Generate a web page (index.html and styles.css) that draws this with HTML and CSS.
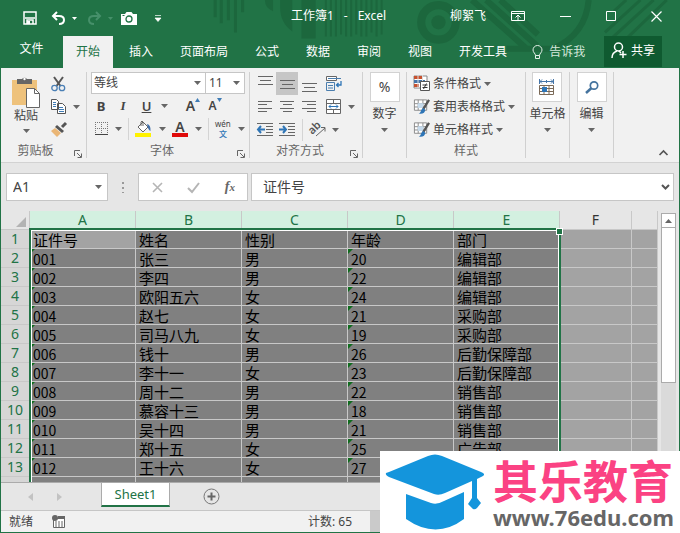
FILE: index.html
```html
<!DOCTYPE html>
<html lang="zh-CN">
<head>
<meta charset="utf-8">
<title>工作簿1 - Excel</title>
<link rel="stylesheet" href="styles.css">
</head>
<body>
<svg class="defs" aria-hidden="true">
  <symbol id="caret" viewBox="0 0 7 4"><path d="M0 0h7L3.500 4z" fill="currentColor"/></symbol>
  <symbol id="launch" viewBox="0 0 8 8"><path d="M.5 6V.5H6M3 3l4 4M7.500 3.500v4h-4" fill="none" stroke="#666"/></symbol>
  <symbol id="brushcell" viewBox="0 0 18 17"><path d="M1.500 1.500h13v11h-13zM5.500 1.500v11M10.500 1.500v11M1.500 5.500h13M1.500 9h13" fill="#fff" stroke="#888"/><path d="M5 5h6v5H5z" fill="#c5daec"/><path d="M17 1.500L11 11" stroke="#555" stroke-width="2.500"/><path d="M6 16c3-1 2-5 5-6l2 2c0 3-3 5-7 4z" fill="#2e75b6"/></symbol>
</svg>
<main class="window">
  <header class="top">
    <svg class="pattern" viewBox="0 0 680 67" preserveAspectRatio="xMaxYMin slice" aria-hidden="true">
      <g fill="none" stroke="#1c673d">
        <path d="M223 0v17M229 0v23M236 0v20M243 0v32M250 0v12" stroke-width="3"/>
        <path d="M332 0v36M337 0v36M342 0v36M347 0v34M352 0v36M357 0v36M362 0v34M367 0v36M372 0v36M377 0v32M382 0v36M387 0v34" stroke-width="2"/>
        <circle cx="443" cy="22" r="17" stroke-width="8"/>
        <path d="M476 0l55 49M490 0l50 45M504 0l37 34M591 0q-3 34-35 48H510" stroke-width="6"/>
        <path d="M655 0l-46 42M642 0l-35 32M668 0l-48 46M628 0l-12 11" stroke-width="3"/>
      </g>
      <circle cx="443" cy="22" r="7" fill="#1c673d"/>
      <path d="M287 0h12v31q-12-8-12-24zM308 0h14v38h-14zM272 0h8v11q-8-3-8-11z" fill="#1c673d"/>
    </svg>
    <div class="titlebar">
      <div class="quick">
        <button aria-label="保存"><svg width="14" height="14" viewBox="0 0 14 14"><path d="M1 1h12v12H1z" fill="none" stroke="#fff" stroke-width="1.500"/><path d="M2 7h10M4 13v-4h6v4" fill="none" stroke="#fff" stroke-width="1.500"/><path d="M4 10h3v3H4z" fill="#fff"/></svg></button>
        <button class="undo" aria-label="撤消"><svg width="15" height="14" viewBox="0 0 15 14"><path d="M6 1L2 5l4 4M2 5h6q5 0 5 4t-5 4" fill="none" stroke="#fff" stroke-width="2"/></svg><svg width="5" height="3"><use href="#caret"/></svg></button>
        <button class="redo" aria-label="恢复"><svg width="15" height="14" viewBox="0 0 15 14"><path d="M9 1l4 4-4 4M13 5H7q-5 0-5 4t5 4" fill="none" stroke="currentColor" stroke-width="2"/></svg><svg width="5" height="3"><use href="#caret"/></svg></button>
        <button class="camera" aria-label="照相机"><svg width="16" height="13" viewBox="0 0 16 13"><path d="M0 2h4l1.500-2h5L12 2h4v11H0z" fill="#fff"/><circle cx="8" cy="7" r="3" fill="none" stroke="#217346" stroke-width="1.300"/><path d="M1.500 3.500h2" stroke="#217346"/></svg></button>
        <button class="more" aria-label="自定义快速访问工具栏"><svg width="6" height="7" viewBox="0 0 6 7"><path d="M0 .5h6M0 3h6L3 6.500z" fill="#fff" stroke="#fff" stroke-width=".7"/></svg></button>
      </div>
      <h1><span>工作簿1</span><span>-</span><span>Excel</span></h1>
      <div class="winctl">
        <span>柳絮飞</span>
        <button aria-label="功能区显示选项"><svg width="14" height="12" viewBox="0 0 14 12"><path d="M.5 1.500h13v9H.5zM.5 3.500h13M7 10V5M4.500 7.500L7 5l2.500 2.500" fill="none" stroke="#fff"/></svg></button>
        <button aria-label="最小化"><svg width="11" height="12"><path d="M0 6.500h11" stroke="#fff"/></svg></button>
        <button aria-label="最大化"><svg width="10" height="10"><path d="M.5.5h9v9h-9z" fill="none" stroke="#fff"/></svg></button>
        <button aria-label="关闭"><svg width="11" height="11"><path d="M.5.5l10 10M10.500.5l-10 10" stroke="#fff" stroke-width="1.200"/></svg></button>
      </div>
    </div>
    <nav class="tabs">
      <button class="file">文件</button>
      <button class="active">开始</button>
      <button>插入</button>
      <button>页面布局</button>
      <button>公式</button>
      <button>数据</button>
      <button>审阅</button>
      <button>视图</button>
      <button>开发工具</button>
      <button class="tell"><svg width="11" height="15" viewBox="0 0 11 15"><path d="M3.500 10.500c0-2-2.500-3-2.500-5.500a4.500 4.500 0 0 1 9 0c0 2.500-2.500 3.500-2.500 5.500zM3.500 10.500v3h4v-3" fill="none" stroke="#e4f1e9"/></svg>告诉我</button>
      <button class="share"><svg width="16" height="17" viewBox="0 0 16 17"><circle cx="7.500" cy="5" r="4" fill="none" stroke="#fff" stroke-width="1.500"/><path d="M1 16c0-4 2-6 5-7M8 9l2 2M12 9v7M8.500 12.500h7" fill="none" stroke="#fff" stroke-width="1.500"/></svg>共享</button>
    </nav>
  </header>

  <section class="ribbon">
    <div class="group clip">
      <div class="body">
        <button class="big paste"><svg width="29" height="31" viewBox="0 0 29 31"><path d="M0 3h25v25H0z" fill="#eec27c"/><path d="M5 2h5a3 3 0 0 1 5 0h5v5H5z" fill="#666"/><circle cx="12.500" cy="2" r="1.200" fill="#fff"/><path d="M14.500 11.500h8l5 5v14h-13z" fill="#fff" stroke="#666"/><path d="M22.500 11.500v5h5" fill="none" stroke="#666"/></svg><span>粘贴</span><svg class="caret"><use href="#caret"/></svg></button>
        <div class="stack">
          <button aria-label="剪切"><svg width="15" height="16" viewBox="0 0 15 16"><path d="M3 1l6.500 9M12 1L5.500 10" stroke="#555" stroke-width="2"/><circle cx="3.500" cy="12" r="2.700" fill="none" stroke="#4a7fb5" stroke-width="1.300"/><circle cx="11" cy="12" r="2.700" fill="none" stroke="#4a7fb5" stroke-width="1.300"/></svg></button>
          <button aria-label="复制"><svg width="15" height="15" viewBox="0 0 15 15"><path d="M.5.5h5l2 2v8h-7zM6.500 4.500h5l3 3v7h-8z" fill="#fff" stroke="#555"/><path d="M2 3.500h3M2 5.500h3M2 7.500h3M8 8.500h4M8 10.500h5M8 12.500h5" stroke="#3f7cb6"/></svg><svg class="caret"><use href="#caret"/></svg></button>
          <button aria-label="格式刷"><svg width="16" height="15" viewBox="0 0 16 15"><path d="M15 1l-4 4" stroke="#555" stroke-width="3"/><path d="M6 3l7 6-2 2-7-6z" fill="#555"/><path d="M4 6l6 5-4 4-6-6z" fill="#eab676"/></svg></button>
        </div>
      </div>
      <div class="label">剪贴板<button class="launch" aria-label="剪贴板设置"><svg><use href="#launch"/></svg></button></div>
    </div>

    <div class="group font">
      <div class="body rows">
        <div class="row fields">
          <label class="pick name"><select aria-label="字体"><option>等线</option></select><svg class="caret"><use href="#caret"/></svg></label>
          <label class="pick size"><select aria-label="字号"><option>11</option></select><svg class="caret"><use href="#caret"/></svg></label>
        </div>
        <div class="row letters">
          <button class="b" aria-label="加粗">B</button>
          <button class="i" aria-label="倾斜">I</button>
          <button class="u" aria-label="下划线"><u>U</u><svg class="caret"><use href="#caret"/></svg></button>
          <button class="grow" aria-label="增大字号">A<svg width="5" height="4"><path d="M0 4h5L2.500 0z" fill="#3f7cb6"/></svg></button>
          <button class="shrink" aria-label="减小字号">A<svg width="5" height="4"><path d="M0 0h5L2.500 4z" fill="#3f7cb6"/></svg></button>
        </div>
        <div class="row colors">
          <button aria-label="边框"><svg width="13" height="13"><path d="M.5 0v12M6.500 0v12M12.500 0v12M0 .5h13M0 6.500h13" stroke="#777" stroke-dasharray="1 1"/><path d="M0 12.500h13" stroke="#444"/></svg><svg class="caret"><use href="#caret"/></svg></button>
          <i class="split"></i>
          <button aria-label="填充颜色"><svg width="17" height="17" viewBox="0 0 17 17"><path d="M3 7l5-5 5 5-5 5z" fill="#fff" stroke="#666"/><path d="M6 6V2q1-2 2 0v4" fill="none" stroke="#666"/><path d="M12 4q4 1 3.500 7Q13 10 12 4z" fill="#3f6ea8"/><path d="M0 13h16v4H0z" fill="#fff200"/></svg><svg class="caret"><use href="#caret"/></svg></button>
          <button class="ink" aria-label="字体颜色"><b>A</b><svg class="caret"><use href="#caret"/></svg></button>
          <i class="split"></i>
          <button class="pinyin" aria-label="显示或隐藏拼音字段"><span>wén<b>文</b></span><svg class="caret"><use href="#caret"/></svg></button>
        </div>
      </div>
      <div class="label">字体<button class="launch" aria-label="字体设置"><svg><use href="#launch"/></svg></button></div>
    </div>

    <div class="group align">
      <div class="body rows">
        <div class="row">
          <button aria-label="顶端对齐"><svg width="15" height="17"><path d="M0 1.500h15M2 5.500h11M0 9.500h15" stroke="#666"/></svg></button>
          <button class="on" aria-label="垂直居中"><svg width="15" height="17"><path d="M0 5.500h15M2 9.500h11M0 13.500h15" stroke="#666"/></svg></button>
          <button aria-label="底端对齐"><svg width="15" height="17"><path d="M0 8.500h15M2 12.500h11M0 16.500h15" stroke="#666"/></svg></button>
          <button class="wide" aria-label="自动换行"><svg width="16" height="16" viewBox="0 0 16 16"><path d="M.5.5h10v4H.5z" fill="#fff" stroke="#666"/><path d="M2 2.500h13M.5 6.500h8v8h-8zM2 9.500h5M2 12h5" fill="none" stroke="#4b7eae"/><path d="M15 5v4h-4M12.500 7l-2 2 2 2" fill="none" stroke="#2e75b6" stroke-width="1.300"/></svg></button>
        </div>
        <div class="row">
          <button aria-label="左对齐"><svg width="15" height="12"><path d="M0 .5h14M0 3.500h9M0 7.500h14M0 10.500h9" stroke="#666"/></svg></button>
          <button aria-label="居中"><svg width="15" height="12"><path d="M0 .5h14M3 3.500h9M0 7.500h14M3 10.500h9" stroke="#666"/></svg></button>
          <button aria-label="右对齐"><svg width="15" height="12"><path d="M0 .5h14M5 3.500h9M0 7.500h14M5 10.500h9" stroke="#666"/></svg></button>
          <button class="wide" aria-label="合并后居中"><svg width="15" height="15"><path d="M.5.5h14v14H.5zM.5 4.500h14M.5 10.500h14M7.500 0v4M7.500 11v4" fill="#fff" stroke="#666"/><path d="M3 7.500h9M5 5.500l-2 2 2 2M10 5.500l2 2-2 2" fill="none" stroke="#2e75b6"/></svg><svg class="caret"><use href="#caret"/></svg></button>
        </div>
        <div class="row">
          <button aria-label="减少缩进量"><svg width="16" height="13"><path d="M0 .5h16M9 3.500h7M9 6.500h7M9 9.500h7M0 12.500h16" stroke="#666"/><path d="M8 6.500H1M4 3L1 6.500 4 10" fill="none" stroke="#2e75b6" stroke-width="2"/></svg></button>
          <button aria-label="增加缩进量"><svg width="16" height="13"><path d="M0 .5h16M9 3.500h7M9 6.500h7M9 9.500h7M0 12.500h16" stroke="#666"/><path d="M0 6.500h7M4 3l3 3.500L4 10" fill="none" stroke="#2e75b6" stroke-width="2"/></svg></button>
          <i class="split"></i>
          <button class="orient" aria-label="方向"><svg width="16" height="15" viewBox="0 0 16 15"><text x="-2" y="9" transform="rotate(-45 5 6)">ab</text><path d="M6 14l9-8M11 5.500h4v4" fill="none" stroke="#666"/></svg><svg class="caret"><use href="#caret"/></svg></button>
        </div>
      </div>
      <div class="label">对齐方式<button class="launch" aria-label="对齐设置"><svg><use href="#launch"/></svg></button></div>
    </div>

    <div class="group narrow">
      <button class="big boxed"><span class="box">%</span><span>数字</span><svg class="caret"><use href="#caret"/></svg></button>
    </div>

    <div class="group styles">
      <div class="body rows">
        <button class="row"><svg width="17" height="17" viewBox="0 0 17 17"><path d="M1 1h13v12H1z" fill="#fff" stroke="#888"/><path d="M1 1h8v3H1zM1 9h5v3H1z" fill="#c7512e"/><path d="M1 5h11v3H1z" fill="#4575a8"/><path d="M5 0v13M9.500 0v9" stroke="#ddd"/><path d="M7.500 6.500h9v9h-9z" fill="#fff" stroke="#555"/><path d="M9.500 10h5M9.500 12.500h5M13.500 8.500l-3 5.500" stroke="#333"/></svg>条件格式<svg class="caret"><use href="#caret"/></svg></button>
        <button class="row"><svg width="17" height="17"><use href="#brushcell"/></svg>套用表格格式<svg class="caret"><use href="#caret"/></svg></button>
        <button class="row"><svg width="17" height="17"><use href="#brushcell"/></svg>单元格样式<svg class="caret"><use href="#caret"/></svg></button>
      </div>
      <div class="label plain">样式</div>
    </div>

    <div class="group narrow">
      <button class="big boxed"><span class="box"><svg width="16" height="17" viewBox="0 0 16 17"><path d="M1 2.500h13M3 .5l-2 2 2 2M12 .5l2 2-2 2M.5 0v5M14.500 0v5M7.500 1v3" fill="none" stroke="#4575a8"/><path d="M.5 6.500h14v9H.5zM.5 9.500h14M.5 12.500h14M5 6v9M10 6v9" fill="#fff" stroke="#7b6a58"/><path d="M3 8h5v5H3z" fill="#2e75b6"/></svg></span><span>单元格</span><svg class="caret"><use href="#caret"/></svg></button>
    </div>
    <div class="group narrow">
      <button class="big boxed"><span class="box"><svg width="14" height="13" viewBox="0 0 14 13"><circle cx="9" cy="4.500" r="3.700" fill="none" stroke="#44739e" stroke-width="1.700"/><path d="M6.500 7L1 12" stroke="#44739e" stroke-width="2.500"/></svg></span><span>编辑</span><svg class="caret"><use href="#caret"/></svg></button>
    </div>
    <button class="collapse" aria-label="折叠功能区"><svg width="9" height="6"><path d="M.5 5l4-4 4 4" fill="none" stroke="#555" stroke-width="1.700"/></svg></button>
  </section>

  <section class="formula">
    <label class="namebox"><input value="A1" aria-label="名称框"><svg class="caret"><use href="#caret"/></svg></label>
    <svg class="dots" width="2" height="12"><path d="M1 1v11" stroke="#999" stroke-width="2" stroke-dasharray="2 3"/></svg>
    <div class="fx">
      <button aria-label="取消"><svg width="11" height="11"><path d="M1 1l9 9M10 1l-9 9" stroke="#b5b5b5" stroke-width="1.600"/></svg></button>
      <button aria-label="输入"><svg width="13" height="11"><path d="M1 6l4 4 7-9" fill="none" stroke="#b5b5b5" stroke-width="2"/></svg></button>
      <button class="fn" aria-label="插入函数">f<small>x</small></button>
    </div>
    <label class="entry"><input value="证件号" aria-label="编辑栏"><svg width="9" height="6"><path d="M1 1l3.500 3.500L8 1" fill="none" stroke="#555" stroke-width="2"/></svg></label>
  </section>

  <section class="sheet">
    <div class="cells">
      <table>
        <colgroup><col class="rh"><col class="c"><col class="c"><col class="c"><col class="c"><col class="c"><col class="f"><col></colgroup>
        <thead><tr><th class="corner"><svg width="10" height="10"><path d="M10 0v10H0z" fill="#b3b3b3"/></svg></th><th>A</th><th>B</th><th>C</th><th>D</th><th>E</th><th class="off">F</th><th class="off"></th></tr></thead>
        <tbody>
          <tr><th>1</th><td class="current">证件号</td><td>姓名</td><td>性别</td><td>年龄</td><td>部门</td><td></td><td></td></tr>
          <tr><th>2</th><td class="t">001</td><td>张三</td><td>男</td><td class="t">20</td><td>编辑部</td><td></td><td></td></tr>
          <tr><th>3</th><td class="t">002</td><td>李四</td><td>男</td><td class="t">22</td><td>编辑部</td><td></td><td></td></tr>
          <tr><th>4</th><td class="t">003</td><td>欧阳五六</td><td>女</td><td class="t">24</td><td>编辑部</td><td></td><td></td></tr>
          <tr><th>5</th><td class="t">004</td><td>赵七</td><td>女</td><td class="t">21</td><td>采购部</td><td></td><td></td></tr>
          <tr><th>6</th><td class="t">005</td><td>司马八九</td><td>女</td><td class="t">19</td><td>采购部</td><td></td><td></td></tr>
          <tr><th>7</th><td class="t">006</td><td>钱十</td><td>男</td><td class="t">26</td><td>后勤保障部</td><td></td><td></td></tr>
          <tr><th>8</th><td class="t">007</td><td>李十一</td><td>女</td><td class="t">23</td><td>后勤保障部</td><td></td><td></td></tr>
          <tr><th>9</th><td class="t">008</td><td>周十二</td><td>男</td><td class="t">22</td><td>销售部</td><td></td><td></td></tr>
          <tr><th>10</th><td class="t">009</td><td>慕容十三</td><td>男</td><td class="t">18</td><td>销售部</td><td></td><td></td></tr>
          <tr><th>11</th><td class="t">010</td><td>吴十四</td><td>男</td><td class="t">21</td><td>销售部</td><td></td><td></td></tr>
          <tr><th>12</th><td class="t">011</td><td>郑十五</td><td>女</td><td class="t">25</td><td>广告部</td><td></td><td></td></tr>
          <tr><th>13</th><td class="t">012</td><td>王十六</td><td>女</td><td class="t">27</td><td></td><td></td><td></td></tr>
          <tr><th></th><td></td><td></td><td></td><td></td><td></td><td></td><td></td></tr>
        </tbody>
      </table>
      <div class="selection"></div>
    </div>
    <div class="scroll">
      <button aria-label="向上滚动"><svg width="7" height="4"><path d="M0 4h7L3.500 0z" fill="#666"/></svg></button>
      <div class="track"><div class="thumb"></div></div>
    </div>
  </section>

  <nav class="sheets">
    <button class="prev" aria-label="上一个工作表"><svg width="5" height="8"><path d="M5 0v8L0 4z" fill="#c2c2c2"/></svg></button>
    <button class="next" aria-label="下一个工作表"><svg width="5" height="8"><path d="M0 0v8l5-4z" fill="#c2c2c2"/></svg></button>
    <button class="sheet-tab">Sheet1</button>
    <button class="add" aria-label="新工作表"><svg width="17" height="17"><circle cx="8.500" cy="8.500" r="7.500" fill="none" stroke="#777"/><path d="M8.500 4.500v8M4.500 8.500h8" stroke="#666" stroke-width="2"/></svg></button>
  </nav>
  <footer class="status">
    <span>就绪</span>
    <button aria-label="录制宏"><svg width="14" height="13" viewBox="0 0 14 13"><path d="M1.500 3.500h11v9h-11z" fill="#fff" stroke="#666"/><path d="M6 2.500h7" stroke="#666" stroke-width="3"/><circle cx="3" cy="3" r="3" fill="#666"/><path d="M3 7h8M3 9h8M3 11h8" stroke="#666" stroke-dasharray="2 1"/></svg></button>
    <span class="count">计数: 65</span>
    <div class="views"></div>
  </footer>
</main>

<aside class="brand">
  <svg width="100" height="76" viewBox="0 0 100 76" aria-hidden="true"><path d="M1 18Q0 20 4 22L49 39Q54 41 60 38L87 26V43L83 49L88 54Q90 55 92 53L96 48L92 43V24L98 21Q101 19 96 17L57 1Q50-2 43 1L4 17Z" fill="#1495dc"/><path d="M21 39l25 9q6 2 13-2l20-9v27q-28 21-58 0z" fill="#1495dc"/></svg>
  <div><strong>其乐教育</strong><span>www.76edu.com</span></div>
</aside>
</body>
</html>
```

FILE: styles.css
```css
* { box-sizing: border-box; }
body {
  margin: 0;
  font: 12px/16px "Noto Sans", "Noto Sans CJK SC", sans-serif;
  color: #444;
}
button, input, select { font: inherit; color: inherit; border: 0; padding: 0; margin: 0; background: none; border-radius: 0; }
button { display: flex; align-items: center; justify-content: center; white-space: nowrap; }
svg { display: block; flex: none; overflow: visible; }
.defs { position: absolute; width: 0; height: 0; }
.caret { width: 7px; height: 4px; color: #666; }

.window {
  display: flex;
  flex-direction: column;
  height: 100vh;
  border: 1px solid #217346;
  border-top: 0;
  background: #e6e6e6;
  overflow: hidden;
}

/* title bar and tabs */
.top { position: relative; background: #217346; color: #fff; }
.pattern { position: absolute; inset: 0; width: 100%; height: 100%; }
.titlebar { position: relative; display: grid; grid-template-columns: 1fr auto 1fr; align-items: center; height: 36px; }
.quick { display: flex; align-items: center; gap: 12px; padding: 0 0 0 22px; }
.quick button { gap: 6px; }
.quick .undo { margin-left: 2px; }
.quick .redo { color: #46906a; margin-left: -2px; }
.quick .camera { margin-left: -4px; }
.quick .more { margin-left: 6px; }
h1 { display: flex; gap: 10px; font-size: 12px; font-weight: 400; margin: 0; padding: 0 3px 4px 0; }
.winctl { display: flex; align-items: center; justify-content: flex-end; gap: 35px; padding: 0 17px 4px 0; }
.winctl span { margin-right: -10px; white-space: nowrap; }
.tabs { position: relative; display: flex; gap: 1px; height: 32px; }
.tabs button { padding: 0 13px; }
.tabs .file { width: 61px; padding-bottom: 6px; }
.tabs .active { background: #f1f1f1; color: #217346; margin-right: 2px; }
.tabs .tell { gap: 6px; padding: 0 0 0 11px; color: #d5e8dc; }
.tabs .share { gap: 4px; height: 31px; padding: 0 7px 2px; margin: 0 17px 0 auto; background: #0f5a30; }

/* ribbon */
.ribbon { display: flex; height: 95px; padding: 4px 0 4px; background: #f1f1f1; border-bottom: 1px solid #d2d2d2; }
.group { flex: none; display: flex; flex-direction: column; border-right: 1px solid #d0d0d0; }
.body { height: 69px; display: flex; }
.rows { flex-direction: column; }
.row { height: 23px; display: flex; align-items: center; }
.label { height: 17px; display: flex; justify-content: center; align-items: flex-end; position: relative; color: #666; padding: 3px 16px 0 0; line-height: 14px; }
.plain { padding-right: 6px; }
.launch { position: absolute; right: 4px; bottom: 0; }
.launch svg { width: 8px; height: 8px; }
.big { flex-direction: column; justify-content: flex-start; }
.clip { width: 86px; }
.paste { width: 50px; padding: 5px 0 0; }
.paste .caret { margin-top: 5px; }
.stack { display: grid; grid-template-rows: repeat(3, 23px); }
.stack button { justify-content: flex-start; gap: 7px; }

.font { width: 163px; padding-left: 4px; }
.fields { height: 22px; }
.pick { display: flex; align-items: center; height: 22px; background: #fff; border: 1px solid #c6c6c6; padding-right: 4px; }
.pick select { appearance: none; flex: 1; min-width: 0; padding-left: 2px; outline: 0; }
.name { width: 115px; }
.size { width: 40px; margin-left: -1px; }
.size select { padding-left: 3px; }
.letters { font-size: 13px; }
.letters .b { width: 20px; font-weight: 700; }
.letters .i { width: 24px; font-weight: 700; font-style: italic; font-family: "Liberation Serif", serif; }
.letters .u { width: 40px; font-weight: 600; gap: 10px; }
.grow, .shrink { width: 22px; font-weight: 600; align-items: flex-start; }
.letters .grow { margin-left: 7px; font-size: 14px; }
.letters .shrink { font-size: 12px; }
.colors { gap: 6px; padding-left: 4px; }
.colors button { gap: 7px; }
.split { width: 1px; height: 22px; background: #d4d4d4; }
.ink b { width: 16px; height: 17px; border-bottom: 4px solid #e00b0b; font: 600 14px/13px "Noto Sans", sans-serif; }
.pinyin span { display: flex; flex-direction: column; align-items: center; font-size: 8px; line-height: 10px; }
.pinyin b { color: #2e75b6; font-weight: 500; }

.align { width: 113px; padding-left: 4px; }
.align .row button { width: 22px; height: 23px; }
.align .row .on { background: #c6c6c6; }
.align .row .wide { width: auto; padding-left: 6px; gap: 7px; }
.align .row .orient { width: auto; padding-left: 7px; gap: 6px; }
.align .split { margin-left: 4px; }
.orient text { font: 600 11px "Noto Sans", sans-serif; fill: #555; }

.narrow { width: 44px; align-items: center; }
.box { display: flex; align-items: center; justify-content: center; width: 30px; height: 30px; margin-bottom: 4px; background: #fff; border: 1px solid #d2d2d2; font-size: 14px; }
.boxed .caret { margin-top: 6px; }
.styles { width: 119px; padding-left: 6px; }
.styles .row { justify-content: flex-start; gap: 3px; }
.collapse { margin: auto 11px 2px auto; }

/* formula bar */
.formula { display: flex; align-items: center; height: 48px; padding: 0 5px; font-size: 14px; }
.namebox, .fx, .entry { display: flex; align-items: center; height: 28px; background: #fff; border: 1px solid #c6c6c6; }
.namebox { width: 102px; padding: 0 5px 0 6px; }
.namebox input, .entry input { flex: 1; min-width: 0; outline: 0; }
.dots { margin: 0 14px; }
.fx { width: 110px; justify-content: space-between; padding: 0 12px 0 13px; }
.fn { font: italic 700 14px "Liberation Serif", serif; color: #666; }
.fn small { font-size: 11px; }
.entry { flex: 1; margin-left: 3px; padding: 0 3px 0 11px; }

/* worksheet */
.sheet { flex: 1; min-height: 0; display: flex; overflow: hidden; }
.cells { flex: 1; min-width: 0; position: relative; overflow: hidden; }
table { table-layout: fixed; width: 100%; border-spacing: 0; }
.rh { width: 29px; }
.c { width: 106px; }
.f { width: 72px; }
th, td { height: 19px; padding: 0; line-height: 18px; border-right: 1px solid #c8c8c8; border-bottom: 1px solid #c8c8c8; white-space: nowrap; }
th { font-size: 14px; font-weight: 400; color: #217346; background: #d3f0e0; }
tbody th { background: #d6d6d6; }
thead .off { background: #e6e6e6; color: #333; }
thead .corner { background: #e6e6e6; }
.corner svg { margin: 3px 3px 0 auto; }
td { position: relative; background: #808080; color: #000; font: 15px/16px "Noto Sans CJK SC", sans-serif; padding: 2px 0 0 3px; }
td:nth-child(n+7) { background: #a3a3a3; }
td.current { background: #a3a3a3; }
td.t { font-size: 14px; }
td.t::before { content: ""; position: absolute; left: 0; top: 0; border-top: 5px solid #0e6b1c; border-right: 5px solid transparent; }
.selection { position: absolute; left: 28px; top: 17px; width: 532px; bottom: -4px; border: 2px solid #217346; box-shadow: inset 0 0 0 1px #fff; }
.selection::after { content: ""; position: absolute; right: -3px; top: -1px; width: 5px; height: 5px; background: #217346; outline: 1px solid #fff; }
.scroll { display: flex; flex-direction: column; width: 21px; padding: 2px 3px 0; }
.scroll button { width: 15px; height: 15px; flex: none; background: #fff; border: 1px solid #ababab; }
.track { flex: 1; background: #dadada; }
.thumb { height: 61%; background: #fff; border: 1px solid #ababab; border-top: 0; }

/* sheet tabs and status */
.sheets { display: flex; align-items: center; height: 28px; border-top: 1px solid #ababab; }
.prev { margin-left: 27px; }
.next { margin-left: 24px; }
.sheet-tab { align-self: flex-start; width: 69px; height: 24px; margin-left: 39px; background: #fff; border: 1px solid #ababab; border-top: 0; border-bottom: 2px solid #217346; color: #217346; font-size: 13px; }
.add { margin-left: 33px; }
.status { display: flex; align-items: center; height: 22px; background: #f1f1f1; border-top: 1px solid #c6c6c6; padding-left: 8px; }
.status button { margin-left: 19px; }
.count { margin-left: 242px; }
.views { flex: 1; align-self: stretch; margin-left: 18px; background: #cacaca; }

/* site badge over the lower right corner */
.brand { position: absolute; right: 0; bottom: 0; display: flex; gap: 8px; width: 300px; height: 82px; padding: 4px 0 0 5px; background: #fff; }
.brand div { display: flex; flex-direction: column; }
.brand strong { color: #fb4283; font: 700 45px/50px "Noto Sans CJK SC", sans-serif; }
.brand span { color: #666; font: 700 22px/24px "Noto Sans", sans-serif; }
```
